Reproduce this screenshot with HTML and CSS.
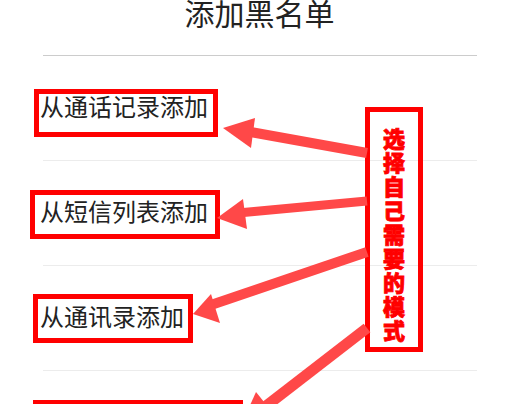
FILE: index.html
```html
<!DOCTYPE html>
<html lang="zh-CN">
<head>
<meta charset="utf-8">
<title>添加黑名单</title>
<link rel="stylesheet" href="styles.css">
</head>
<body>
<div class="page">
  <header class="header"><h1 class="title">添加黑名单</h1></header>
  <div class="divider"></div>
  <ul class="list">
    <li class="row row-1"><span class="label label-1">从通话记录添加</span></li>
    <li class="sep"></li>
    <li class="row row-2"><span class="label label-2">从短信列表添加</span></li>
    <li class="sep"></li>
    <li class="row row-3"><span class="label label-3">从通讯录添加</span></li>
    <li class="sep"></li>
    <li class="row row-4"><span class="label label-4">手动输入号码添加</span></li>
  </ul>
  <div class="note"><span class="note-text">选择自己需要的模式</span></div>
  <svg class="arrows" width="509" height="404" viewBox="0 0 509 404" aria-hidden="true">
    <g fill="#ff4848" stroke="#ff4848">
      <line x1="245" y1="131" x2="367" y2="153" stroke-width="10"/>
      <polygon points="223,128 255,118 251,148" stroke="none"/>
      <line x1="238" y1="213" x2="367" y2="201" stroke-width="9"/>
      <polygon points="217,218 243,199 247,229" stroke="none"/>
      <line x1="208" y1="306" x2="367" y2="252" stroke-width="10"/>
      <polygon points="193,314 211,294 220,323" stroke="none"/>
      <line x1="367" y1="328" x2="266" y2="406" stroke-width="11"/>
      <polygon points="242,423 256,392 277,418" stroke="none"/>
    </g>
  </svg>
</div>
</body>
</html>
```
FILE: styles.css
```css
* { box-sizing: border-box; }
html, body { margin: 0; padding: 0; background: #fff; }
body {
  font-family: "Noto Sans CJK SC", "Noto Sans", sans-serif;
  color: #222;
  width: 509px;
  height: 404px;
  overflow: hidden;
}
.page { position: relative; width: 509px; height: 404px; overflow: hidden; }
.header {
  height: 55px;
  padding-left: 10px;
  text-align: center;
}
.title {
  margin: 0;
  font-size: 30px;
  line-height: 24px;
  font-weight: 400;
  color: #222;
}
.divider {
  height: 1px;
  background: #cccccc;
  margin: 0 32px 0 43px;
}
.list { list-style: none; margin: 0; padding: 0; }
.row {
  height: 104px;
  display: flex;
  align-items: flex-start;
}
.sep {
  height: 1px;
  background: #ececec;
  margin: 0 32px 0 43px;
}
.label {
  display: block;
  border: 5px solid #f00;
  font-size: 24px;
  line-height: 24px;
  color: #222;
  white-space: nowrap;
}
.label-1 { margin: 33px 0 0 34px; padding: 0 5px 14px 1px; }
.label-2 { margin: 29px 0 0 30px; padding: 4px 7px 11px 5px; }
.label-3 { margin: 28px 0 0 33px; padding: 5px 4px 10px 2px; }
.label-4 { margin: 29px 0 0 33px; padding: 5px 6px 10px 2px; }
.note {
  position: absolute;
  left: 365px;
  top: 107px;
  width: 58px;
  height: 245px;
  border: 5px solid #f00;
  padding-top: 13px;
}
.note-text {
  display: block;
  width: 22px;
  margin: 0 auto;
  text-align: center;
  color: #f00;
  font-size: 22px;
  line-height: 24px;
  font-weight: 900;
  -webkit-text-stroke: 0.8px #f00;
  word-break: break-all;
}
.arrows {
  position: absolute;
  left: 0;
  top: 0;
  pointer-events: none;
}
```
